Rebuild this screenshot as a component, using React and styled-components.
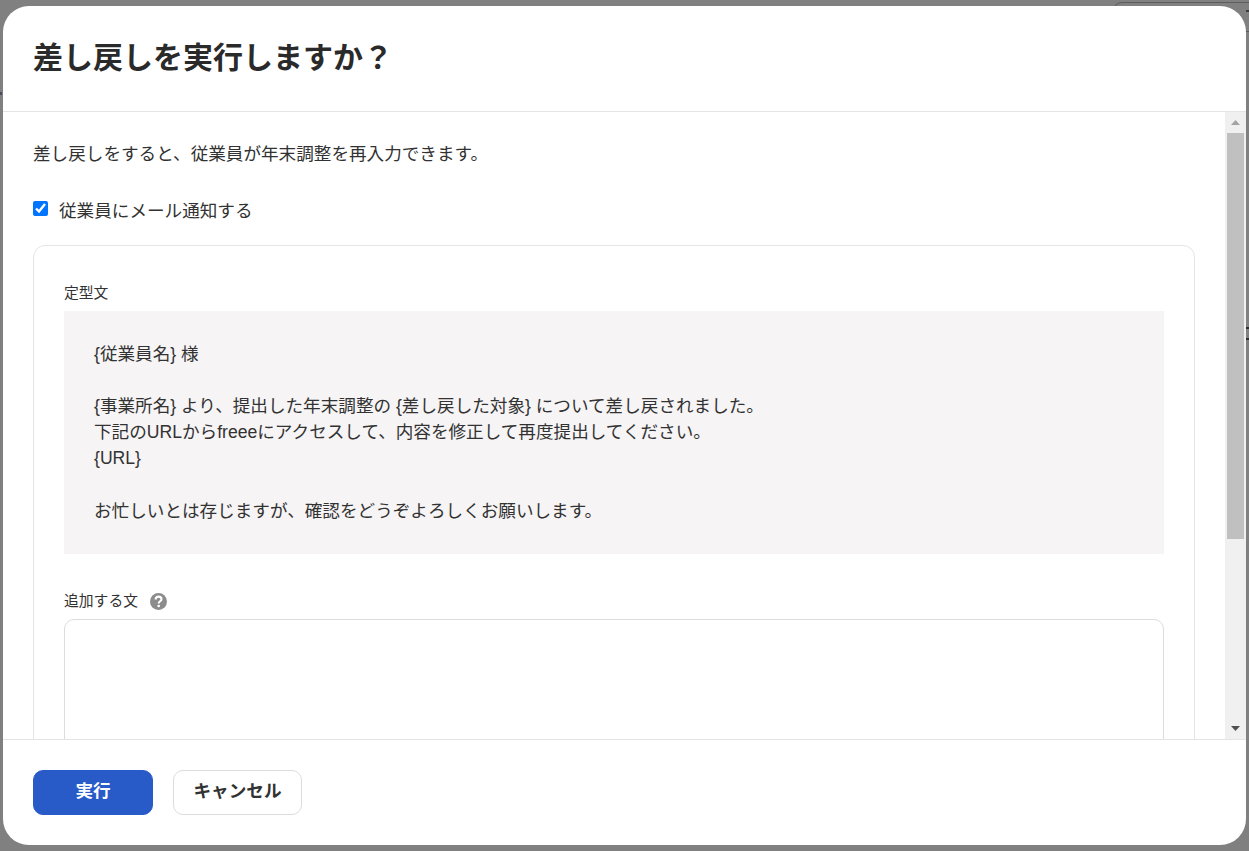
import React from "react";
import styled, { createGlobalStyle } from "styled-components";

const Global = createGlobalStyle`
  html, body { margin: 0; padding: 0; height: 100%; background: #808080; overflow: hidden; }
  #root { height: 100%; }
  * { box-sizing: border-box; }
`;

const Backdrop = styled.div`
  position: relative;
  height: 851px;
  padding: 6px 3px;
  background: #808080;
  overflow: hidden;
  font-family: "Liberation Sans", "Noto Sans CJK JP", sans-serif;
  color: #323232;
`;

const GhostButton = styled.div`
  position: absolute;
  left: 1112px;
  top: 2px;
  width: 200px;
  height: 30px;
  border: 1px solid #5c5c5c;
  border-radius: 10px;
`;

const GhostMark = styled.div`
  position: absolute;
  left: ${(p) => p.$x}px;
  top: ${(p) => p.$y}px;
  width: ${(p) => p.$w}px;
  height: ${(p) => p.$h}px;
  background: ${(p) => p.$c};
`;

const Dialog = styled.div`
  position: relative;
  height: 839px;
  background: #fff;
  border-radius: 26px;
  display: flex;
  flex-direction: column;
  overflow: hidden;
`;

const Header = styled.header`
  height: 106px;
  flex: none;
  padding: 0 30px;
  display: flex;
  align-items: center;
  border-bottom: 1px solid #e4e4e4;
`;

const Title = styled.h1`
  margin: 0 0 2px;
  font-size: 30px;
  line-height: 40px;
  font-weight: 700;
  color: #2a2a2a;
`;

const Middle = styled.div`
  flex: 1;
  min-height: 0;
  display: flex;
`;

const Body = styled.div`
  flex: 1;
  min-width: 0;
  overflow: hidden;
  padding: 30px 30px 0;
`;

const Lead = styled.p`
  margin: 0;
  font-size: 17.6px;
  line-height: 24px;
`;

const CheckRow = styled.label`
  display: flex;
  align-items: center;
  gap: 11px;
  margin-top: 33px;
  font-size: 17.6px;
  line-height: 24px;
`;

const Check = styled.input`
  width: 15px;
  height: 15px;
  margin: 0 0 6px;
  accent-color: #0075ff;
`;

const Card = styled.section`
  margin-top: 22px;
  padding: 35px 30px 30px;
  border: 1px solid #e4e4e4;
  border-radius: 12px;
  height: 620px;
`;

const FieldLabel = styled.div`
  display: flex;
  align-items: center;
  gap: 12px;
  font-size: 14.8px;
  line-height: 20px;
  height: 24px;
`;

const Template = styled.div`
  margin-top: 6px;
  padding: 29.5px 30px;
  background: #f6f4f5;
  height: 243px;
  font-size: 17.6px;
  line-height: 26.2px;
  white-space: pre-line;
`;

const SecondLabel = styled(FieldLabel)`
  margin-top: 35px;
`;

const AddText = styled.div`
  margin-top: 6px;
  height: 300px;
  border: 1px solid #dcdcdc;
  border-radius: 10px;
`;

const Bar = styled.div`
  flex: none;
  width: 21px;
  background: #f0f0f0;
  display: flex;
  flex-direction: column;
  align-items: center;
`;

const ArrowBox = styled.div`
  flex: none;
  height: 21px;
  display: flex;
  align-items: center;
  justify-content: center;
`;

const Thumb = styled.div`
  flex: none;
  width: 17px;
  height: 406px;
  background: #c0c0c0;
`;

const Spacer = styled.div`
  flex: 1;
`;

const Footer = styled.footer`
  height: 106px;
  flex: none;
  padding: 30px 30px 0;
  display: flex;
  align-items: flex-start;
  gap: 20px;
  border-top: 1px solid #e4e4e4;
`;

const Button = styled.button`
  height: 45px;
  width: ${(p) => (p.$primary ? "120px" : "129px")};
  border-radius: 10px;
  border: 1px solid ${(p) => (p.$primary ? "#285ac8" : "#dcdcdc")};
  background: ${(p) => (p.$primary ? "#285ac8" : "#fff")};
  color: ${(p) => (p.$primary ? "#fff" : "#323232")};
  font-family: inherit;
  font-size: 17.6px;
  line-height: 24px;
  font-weight: 700;
  padding: 0 0 3px;
`;

const Arrow = ({ up, color }) => (
  <svg width="9" height="5" viewBox="0 0 9 5">
    <path d={up ? "M0 5 L4.5 0 L9 5 Z" : "M0 0 L4.5 5 L9 0 Z"} fill={color} />
  </svg>
);

const Help = () => (
  <svg width="17" height="17" viewBox="0 0 17 17">
    <circle cx="8.5" cy="8.5" r="8.5" fill="#8c8c8c" />
    <path
      d="M5.6 6.5 C5.6 4.7 6.9 3.6 8.6 3.6 C10.3 3.6 11.5 4.7 11.5 6.2 C11.5 8.2 8.7 8.3 8.7 10.4"
      fill="none"
      stroke="#fff"
      strokeWidth="2.1"
    />
    <circle cx="8.7" cy="13" r="1.35" fill="#fff" />
  </svg>
);

const templateText = `{従業員名} 様

{事業所名} より、提出した年末調整の {差し戻した対象} について差し戻されました。
下記のURLからfreeeにアクセスして、内容を修正して再度提出してください。
{URL}

お忙しいとは存じますが、確認をどうぞよろしくお願いします。`;

export default function App() {
  return (
    <Backdrop>
      <Global />
      <GhostButton />
      <GhostMark $x={1246} $y={10} $w={3} $h={2} $c="#3c3c3c" />
      <GhostMark $x={1246} $y={327} $w={3} $h={2} $c="#2e2e2e" />
      <GhostMark $x={1246} $y={338} $w={3} $h={2} $c="#2e2e2e" />
      <GhostMark $x={0} $y={92} $w={2} $h={3} $c="#4a4a5a" />
      <Dialog>
        <Header>
          <Title>差し戻しを実行しますか？</Title>
        </Header>
        <Middle>
          <Body>
            <Lead>差し戻しをすると、従業員が年末調整を再入力できます。</Lead>
            <CheckRow>
              <Check type="checkbox" defaultChecked />
              従業員にメール通知する
            </CheckRow>
            <Card>
              <FieldLabel>定型文</FieldLabel>
              <Template>{templateText}</Template>
              <SecondLabel>
                追加する文
                <Help />
              </SecondLabel>
              <AddText />
            </Card>
          </Body>
          <Bar>
            <ArrowBox>
              <Arrow up color="#a3a3a3" />
            </ArrowBox>
            <Thumb />
            <Spacer />
            <ArrowBox>
              <Arrow color="#505050" />
            </ArrowBox>
          </Bar>
        </Middle>
        <Footer>
          <Button $primary>実行</Button>
          <Button>キャンセル</Button>
        </Footer>
      </Dialog>
    </Backdrop>
  );
}
